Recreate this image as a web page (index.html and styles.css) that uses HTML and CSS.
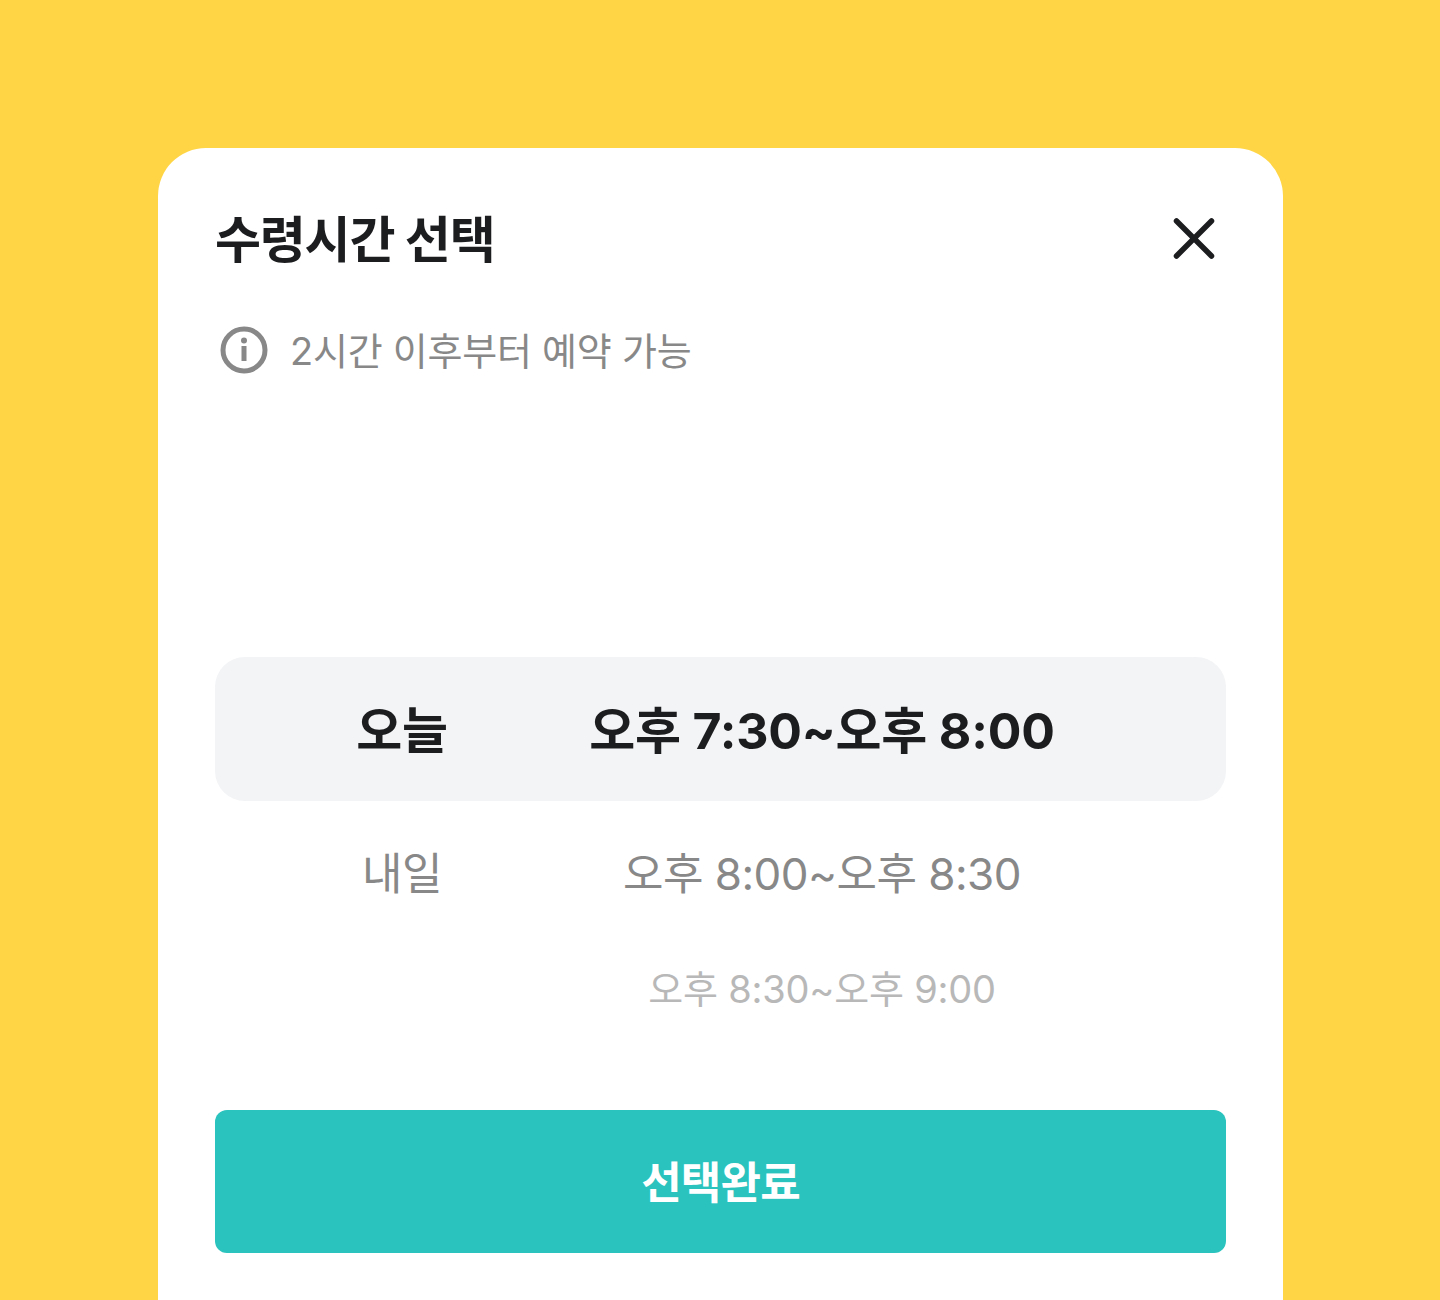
FILE: index.html
```html
<!DOCTYPE html>
<html lang="ko">
<head>
    <meta charset="UTF-8">
    <meta name="viewport" content="width=device-width, initial-scale=1.0">
    <title>수령시간 선택</title>
    <link rel="stylesheet" href="styles.css">
</head>
<body>

<div class="sheet">
    <div class="sheet-header">
        <h1>수령시간 선택</h1>
        <button type="button" class="close-btn" aria-label="닫기">
            <svg width="44" height="44" viewBox="0 0 44 44" fill="none">
                <path d="M4.5 5L39.5 40M39.5 5L4.5 40" stroke="#1c1d1f" stroke-width="5.5" stroke-linecap="round"/>
            </svg>
        </button>
    </div>

    <div class="notice">
        <svg width="48" height="48" viewBox="0 0 48 48" fill="none">
            <circle cx="24" cy="24" r="21" stroke="#888888" stroke-width="5"/>
            <circle cx="24" cy="14.5" r="3" fill="#888888"/>
            <rect x="21.5" y="20" width="5" height="15" fill="#888888"/>
        </svg>
        <span class="notice-text">2시간 이후부터 예약 가능</span>
    </div>

    <div class="picker">
        <div class="picker-row selected">
            <span class="day">오늘</span>
            <span class="time">오후 7:30~오후 8:00</span>
        </div>
        <div class="picker-row near">
            <span class="day">내일</span>
            <span class="time">오후 8:00~오후 8:30</span>
        </div>
        <div class="picker-row far">
            <span class="day"></span>
            <span class="time">오후 8:30~오후 9:00</span>
        </div>
    </div>

    <button type="button" class="done-btn">선택완료</button>
</div>

</body>
</html>
```

FILE: styles.css
```css
body {
    font-family: Inter, 'Noto Sans CJK KR', sans-serif;
    background-color: #ffd545;
    margin: 0;
    height: 1300px;
    overflow: hidden;
}
.sheet {
    box-sizing: border-box;
    width: 1125px;
    height: 1152px;
    margin: 148px 0 0 158px;
    padding: 57px 57px 0 57px;
    background-color: #fff;
    border-radius: 48px 48px 0 0;
}
.sheet-header {
    display: flex;
    justify-content: space-between;
    align-items: center;
    height: 66px;
}
h1 {
    margin: 0 0 4px 0;
    font-size: 50px;
    font-weight: 700;
    color: #1c1d1f;
    letter-spacing: -1.2px;
}
.close-btn {
    display: flex;
    padding: 0;
    margin-right: 10px;
    background: none;
    border: none;
    cursor: pointer;
}
.notice {
    display: flex;
    align-items: center;
    gap: 22px;
    margin-top: 49px;
    padding-left: 5px;
    height: 60px;
    font-size: 38px;
    letter-spacing: -0.25px;
    color: #888888;
}
.notice-text {
    margin-bottom: 4px;
}
.picker {
    margin-top: 277px;
}
.picker-row {
    box-sizing: border-box;
    display: grid;
    grid-template-columns: 374px 466px;
    align-items: center;
    padding-bottom: 4px;
    text-align: center;
}
.selected {
    height: 144px;
    background-color: #f3f4f6;
    border-radius: 30px;
    font-size: 50px;
    font-weight: 700;
    letter-spacing: -0.2px;
    color: #1c1d1f;
}
.near {
    height: 144px;
    font-size: 44px;
    letter-spacing: -0.55px;
    color: #888888;
}
.far {
    height: 87px;
    font-size: 38px;
    letter-spacing: -0.2px;
    color: #b8b8b8;
}
.time {
    white-space: nowrap;
}
.done-btn {
    display: block;
    width: 100%;
    height: 143px;
    margin-top: 78px;
    padding: 0 0 4px 0;
    background-color: #2bc3bd;
    color: #fff;
    border: none;
    border-radius: 12px;
    font-family: inherit;
    font-size: 44px;
    font-weight: 700;
    letter-spacing: -0.8px;
    cursor: pointer;
}
```
